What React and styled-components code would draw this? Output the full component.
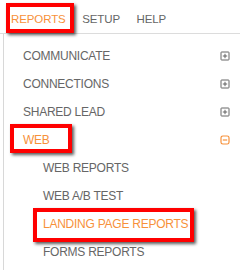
import React from "react";
import styled, { createGlobalStyle } from "styled-components";

const ORANGE = "#f7913a";
const GRAY = "#666666";

const menu = [
  { label: "COMMUNICATE", icon: "plus" },
  { label: "CONNECTIONS", icon: "plus" },
  { label: "SHARED LEAD", icon: "plus" },
  { label: "WEB", icon: "minus", active: true, mark: { left: 6, top: -2, width: 62, height: 29 } },
  { label: "WEB REPORTS", sub: true },
  { label: "WEB A/B TEST", sub: true },
  {
    label: "LANDING PAGE REPORTS",
    sub: true,
    active: true,
    mark: { left: 29, top: -2, width: 161, height: 34 },
  },
  { label: "FORMS REPORTS", sub: true },
];

const BoxIcon = ({ type }) => (
  <IconSvg viewBox="0 0 10 10" $active={type === "minus"}>
    <rect x="1" y="1" width="8" height="8" rx={type === "minus" ? 1.8 : 0.6} />
    <line x1="2.8" y1="5" x2="7.2" y2="5" />
    {type === "plus" && <line x1="5" y1="2.8" x2="5" y2="7.2" />}
  </IconSvg>
);

const App = () => {
  return (
    <Page>
      <GlobalStyle />
      <TopNav>
        <NavItem $active>
          REPORTS
          <Highlight $left={3} $top={3} $width={68} $height={30} />
        </NavItem>
        <NavItem>SETUP</NavItem>
        <NavItem>HELP</NavItem>
      </TopNav>
      <Dropdown>
        {menu.map((item) => (
          <MenuRow key={item.label} $sub={item.sub}>
            <MenuLabel $active={item.active}>{item.label}</MenuLabel>
            {item.icon && <BoxIcon type={item.icon} />}
            {item.mark && (
              <Highlight
                $left={item.mark.left}
                $top={item.mark.top}
                $width={item.mark.width}
                $height={item.mark.height}
              />
            )}
          </MenuRow>
        ))}
      </Dropdown>
    </Page>
  );
};

const GlobalStyle = createGlobalStyle`
  html, body {
    margin: 0;
    padding: 0;
    background: #ffffff;
  }
  body {
    font-family: "Liberation Sans", Arial, sans-serif;
  }
`;

const Page = styled.div`
  width: 240px;
  height: 270px;
  overflow: hidden;
  background: #ffffff;
`;

const TopNav = styled.div`
  height: 34px;
  display: flex;
  align-items: stretch;
  padding-left: 3px;
  border-bottom: 1px solid #dcdcdc;
  box-sizing: border-box;
`;

const NavItem = styled.span`
  position: relative;
  display: flex;
  align-items: center;
  padding: 4px 8.5px 0 8px;
  font-size: 11.5px;
  letter-spacing: -0.1px;
  color: ${(p) => (p.$active ? ORANGE : GRAY)};
`;

const Dropdown = styled.div`
  margin-left: 3px;
  padding-top: 8px;
  border-left: 1px solid #d8d8d8;
  height: 240px;
`;

const MenuRow = styled.div`
  position: relative;
  height: 28px;
  display: flex;
  align-items: center;
  justify-content: space-between;
  padding: 0 10px 0 ${(p) => (p.$sub ? "39px" : "19px")};
`;

const MenuLabel = styled.span`
  font-size: 12px;
  letter-spacing: -0.25px;
  color: ${(p) => (p.$active ? ORANGE : GRAY)};
`;

const IconSvg = styled.svg`
  width: 10px;
  height: 10px;
  fill: none;
  stroke: ${(p) => (p.$active ? ORANGE : "#555555")};
  stroke-width: ${(p) => (p.$active ? 1.2 : 0.9)};
`;

const Highlight = styled.span`
  position: absolute;
  left: ${(p) => p.$left}px;
  top: ${(p) => p.$top}px;
  width: ${(p) => p.$width}px;
  height: ${(p) => p.$height}px;
  box-sizing: border-box;
  border: 4px solid #ff0000;
  box-shadow: 2px 2px 3px rgba(0, 0, 0, 0.65);
  pointer-events: none;
`;

export default App;
